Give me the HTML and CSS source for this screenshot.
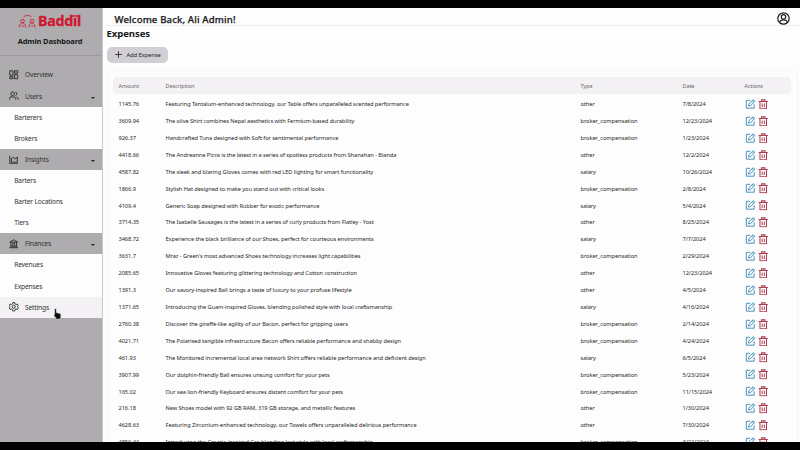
FILE: index.html
```html
<!DOCTYPE html>
<html lang="en">
<head>
<meta charset="utf-8">
<title>Baddil Admin Dashboard</title>
<link rel="stylesheet" href="styles.css">
</head>
<body>
<svg class="defs" aria-hidden="true">
  <symbol id="edit" viewBox="0 0 24 24"><path d="M12 3H3v18h18v-9M8 16l1-5L19 1.500l3.500 3.500L13 15zM16.500 4l3.500 3.500"/></symbol>
  <symbol id="trash" viewBox="0 0 24 24"><path d="M1.500 5.500h21M8 5V2h8v3M4.500 6v16.500h15V6M9.500 10v8M14.500 10v8"/></symbol>
</svg>
<div class="screen">
  <aside class="sidebar">
    <div class="brand">
      <div class="logo">
        <svg class="logo-mark" viewBox="0 0 34 26"><path d="M1 25c0-7 3-9 6-9s6 2 6 9M20 25c0-7 3-9 6-9s6 2 6 9M9 4c4-4 12-4 16 0M5 22h5M24 22h5"/><circle cx="7" cy="12" r="3.500"/><circle cx="26" cy="12" r="3.500"/></svg>
        <span>Baddïl</span>
      </div>
      <h2>Admin Dashboard</h2>
    </div>
    <nav>
      <a class="item"><svg viewBox="0 0 24 24"><path d="M2 2h8v11H2zM14 2h8v6h-8zM2 17h8v5H2zM14 12h8v10h-8z"/></svg>Overview</a>
      <a class="item"><svg viewBox="0 0 24 24"><circle cx="9" cy="7" r="4.500"/><path d="M1 22v-3c0-3 2-4 4-4h8c2 0 4 1 4 4v3M16 2.500c5 1 5 8 0 9M19 15c3 1 4 2 4 7"/></svg>Users<i class="caret"></i></a>
      <a class="sub">Barterers</a>
      <a class="sub">Brokers</a>
      <a class="item"><svg viewBox="0 0 24 24"><path d="M2 2v20h21M6 18V9l5-3 5 4 5-5v13z"/></svg>Insights<i class="caret"></i></a>
      <a class="sub">Barters</a>
      <a class="sub">Barter Locations</a>
      <a class="sub">Tiers</a>
      <a class="item"><svg viewBox="0 0 24 24"><path d="M2 8l10-6 10 6zM1 22h22M3 18.500h18M5 9v9M9.700 9v9M14.300 9v9M19 9v9"/></svg>Finances<i class="caret"></i></a>
      <a class="sub">Revenues</a>
      <a class="sub">Expenses</a>
      <a class="item hover"><svg viewBox="0 0 24 24"><path d="M9.500 1.500h5l.8 3.500 2.500 1.400 3.500-1 2.200 4.100-2.500 2.500 2.500 2.500-2.200 4.100-3.500-1-2.500 1.400-.8 3.500h-5L8.700 19l-2.500-1.400-3.500 1L.5 14.500 3 12 .5 9.500l2.200-4.100 3.500 1L8.700 5z"/><circle cx="12" cy="12" r="3.800"/></svg>Settings</a>
    </nav>
  </aside>
  <main>
    <header><h1>Welcome Back, Ali Admin!</h1>
      <svg class="avatar" viewBox="0 0 24 24"><circle cx="12" cy="12" r="10.500"/><circle cx="12" cy="9" r="4"/><path d="M5 20c0-4 3-5.500 7-5.500s7 1.500 7 5.500"/></svg>
    </header>
    <h3>Expenses</h3>
    <button><svg viewBox="0 0 24 24"><path d="M12 1v22M1 12h22"/></svg>Add Expense</button>
    <section class="card">
      <div class="row head"><span>Amount</span><span>Description</span><span>Type</span><span>Date</span><span>Actions</span></div>
      <div id="rows"></div>
    </section>
  </main>
</div>
<svg class="cursor" viewBox="0 0 12 16"><path d="M2 1h2.500v5l6 1.500v5L9 15H4.500L1 9.500l1-1z"/></svg>
<script src="app.js"></script>
</body>
</html>
```
FILE: styles.css
```css
* { box-sizing: border-box; }
body { margin: 0; width: 800px; height: 450px; padding: 8px 0; overflow: hidden; background: #000; color: #222; font-family: "Noto Sans", "Open Sans", sans-serif; }
svg { fill: none; stroke: currentColor; stroke-width: 2; flex: none; }
.defs { position: absolute; width: 0; height: 0; }
h1, h2, h3 { margin: 0; color: #191b20; }
.screen { display: flex; height: 434px; background: #fefdfe; overflow: hidden; }
.sidebar { width: 103px; background: #aeacae; border-right: 1px solid #c9c7ca; flex: none; }
.brand { height: 48px; border-bottom: 1px solid #9b999c; padding-top: 4px; margin-bottom: 8.4px; }
.logo { display: flex; justify-content: center; align-items: center; height: 18px; color: #cf1830; font: 700 14.2px/18px "Noto Sans", sans-serif; gap: 2px; padding-right: 2px; letter-spacing: -.2px; }
.logo-mark { width: 17px; height: 13px; stroke-width: 1.7; }
.logo span { -webkit-text-stroke: .3px; }
h2 { font-size: 7.5px; line-height: 10px; margin-top: 6px; text-align: center; padding-right: 2px; letter-spacing: -.14px; font-weight: 700; }
.item, .sub { display: flex; align-items: center; height: 21.12px; font-size: 6.7px; letter-spacing: -.18px; color: #333; }
.item { padding: 0 7px 0 9px; gap: 6.5px; }
.item svg { width: 9.500px; height: 9.500px; color: #252525; stroke-width: 2.3; }
.sub { padding-left: 14.2px; background: #fefdfe; }
.hover { background: #f3f1f3; }
.caret { margin: 3px 0 0 auto; border: 2px solid transparent; border-top: 2.2px solid #222; border-bottom: 0; }
main { flex: 1; min-width: 0; padding-left: 3.500px; }
header { display: flex; align-items: center; justify-content: space-between; height: 18px; padding: 5px 10px 0 8px; border-bottom: 1px solid #eeecef; }
h1 { font-size: 9.6px; line-height: 13px; font-weight: 500; letter-spacing: .13px; -webkit-text-stroke: .25px #191b20; }
.avatar { width: 13px; height: 13px; color: #222; margin-top: -2px; stroke-width: 2.3; }
h3 { font-size: 9.6px; line-height: 15px; font-weight: 700; letter-spacing: -.1px; }
button { display: flex; align-items: center; gap: 5px; width: 61px; height: 16.500px; margin: 5.500px 0 0; padding: 0 0 0 8px; border: 0; border-radius: 5px; background: #d1cfd3; color: #24262b; font: 5.9px "Noto Sans", sans-serif; letter-spacing: -.14px; white-space: nowrap; }
button svg { width: 7px; height: 7px; stroke-width: 3; }
.card { height: 380px; margin: 7px 2px 0 0; padding: 6px 6px 0 5px; border: 1px solid #f6f4f7; border-radius: 6px; }
.row { display: grid; grid-template-columns: 47px 415px 102px 62px 1fr; align-items: center; height: 16.92px; padding-left: 6px; font-size: 5.7px; letter-spacing: -.075px; white-space: nowrap; color: #292929; }
.head { height: 17px; margin-bottom: 1.700px; background: #f3f1f4; border-radius: 4px; color: #68666c; font-size: 5.5px; letter-spacing: -.08px; }
.actions { display: flex; gap: 3px; }
.actions svg { width: 10.500px; height: 10.500px; }
.edit { color: #3186b4; }
.trash { color: #b03a50; stroke-width: 2.3; }
.cursor { position: absolute; left: 53px; top: 307.500px; width: 9px; height: 12px; fill: #111; stroke: #ddd; stroke-width: 1; }
```
FILE: app.js
```js
const b = "broker_compensation";
const data = [
  ["1145.76", "Featuring Tantalum-enhanced technology, our Table offers unparalleled scented performance", "other", "7/8/2024"],
  ["3609.94", "The olive Shirt combines Nepal aesthetics with Fermium-based durability", b, "12/23/2024"],
  ["926.37", "Handcrafted Tuna designed with Soft for sentimental performance", b, "1/23/2024"],
  ["4418.66", "The Andreanne Pizza is the latest in a series of spotless products from Shanahan - Blanda", "other", "12/2/2024"],
  ["4587.82", "The sleek and blaring Gloves comes with red LED lighting for smart functionality", "salary", "10/26/2024"],
  ["1866.9", "Stylish Hat designed to make you stand out with critical looks", b, "2/8/2024"],
  ["4109.4", "Generic Soap designed with Rubber for exotic performance", "salary", "5/4/2024"],
  ["3714.35", "The Isabelle Sausages is the latest in a series of curly products from Flatley - Yost", "other", "8/25/2024"],
  ["3468.72", "Experience the black brilliance of our Shoes, perfect for courteous environments", "salary", "7/7/2024"],
  ["3631.7", "Mraz - Green's most advanced Shoes technology increases light capabilities", b, "2/29/2024"],
  ["2085.65", "Innovative Gloves featuring glittering technology and Cotton construction", "other", "12/23/2024"],
  ["1391.3", "Our savory-inspired Ball brings a taste of luxury to your profuse lifestyle", "other", "4/5/2024"],
  ["1371.65", "Introducing the Guam-inspired Gloves, blending polished style with local craftsmanship", "salary", "4/16/2024"],
  ["2760.38", "Discover the giraffe-like agility of our Bacon, perfect for gripping users", b, "2/14/2024"],
  ["4021.71", "The Polarised tangible infrastructure Bacon offers reliable performance and shabby design", b, "4/24/2024"],
  ["461.93", "The Monitored incremental local area network Shirt offers reliable performance and deficient design", "salary", "6/5/2024"],
  ["3907.99", "Our dolphin-friendly Ball ensures unsung comfort for your pets", b, "5/23/2024"],
  ["165.02", "Our sea lion-friendly Keyboard ensures distant comfort for your pets", b, "11/15/2024"],
  ["216.18", "New Shoes model with 92 GB RAM, 319 GB storage, and metallic features", "other", "1/30/2024"],
  ["4628.63", "Featuring Zirconium-enhanced technology, our Towels offers unparalleled delirious performance", "other", "7/30/2024"],
  ["4850.44", "Introducing the Croatia-inspired Car, blending lost style with local craftsmanship", b, "3/22/2024"]
];
document.getElementById("rows").innerHTML = data.map(r =>
  `<div class="row">${r.map(c => `<span>${c}</span>`).join("")}<span class="actions"><svg class="edit"><use href="#edit"/></svg><svg class="trash"><use href="#trash"/></svg></span></div>`
).join("");
```
